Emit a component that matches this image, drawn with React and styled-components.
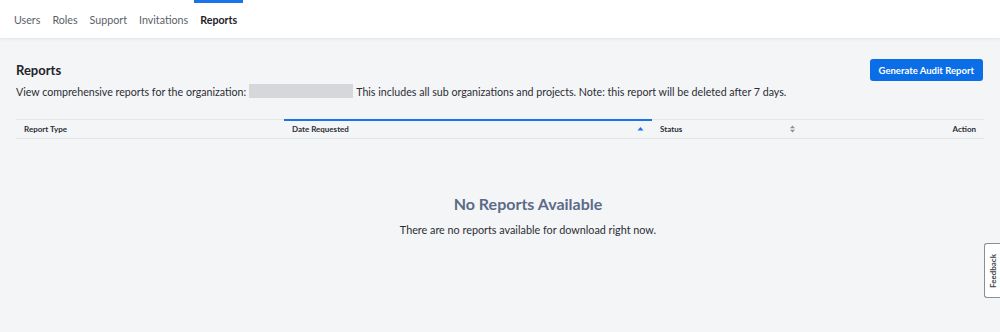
import React from 'react';
import styled, { createGlobalStyle } from 'styled-components';

const GlobalStyle = createGlobalStyle`
    html, body {
        margin: 0;
        padding: 0;
        background: #f4f5f7;
        font-family: Lato, "Noto Sans", sans-serif;
        color: #1f2329;
    }
    #root {
        min-height: 332px;
    }
`;

const Page = styled.div`
    position: relative;
    width: 1000px;
    height: 332px;
    overflow: hidden;
    background: #f4f5f7;
`;

const NavBar = styled.nav`
    display: flex;
    align-items: stretch;
    gap: 12px;
    height: 38px;
    padding: 0 14px;
    background: #ffffff;
    box-shadow: 0 1px 3px rgba(0, 0, 0, 0.08);
`;

const Tab = styled.div`
    display: flex;
    align-items: center;
    padding: 0 ${props => (props.active ? '6px' : '0')};
    margin: 0 ${props => (props.active ? '-6px' : '0')};
    font-size: 10.7px;
    font-weight: ${props => (props.active ? 700 : 400)};
    color: ${props => (props.active ? '#1f2329' : '#5b6068')};
    border-top: 3px solid ${props => (props.active ? '#1a73e8' : 'transparent')};
    border-bottom: 3px solid transparent;
`;

const Content = styled.main`
    padding: 20px 16px 0 16px;
`;

const HeaderRow = styled.div`
    display: flex;
    justify-content: space-between;
    align-items: flex-start;
`;

const Title = styled.h2`
    margin: 4px 0 6px 0;
    font-size: 13px;
    font-weight: 700;
    color: #1f2329;
`;

const Description = styled.p`
    display: flex;
    align-items: center;
    margin: 0;
    font-size: 10.65px;
    color: #2a2e34;
`;

const Redacted = styled.span`
    display: inline-block;
    width: 104px;
    height: 14px;
    margin: 0 3px 0 3px;
    background: #d6d7da;
`;

const PrimaryButton = styled.button`
    margin: 1px 1px 0 0;
    height: 22px;
    padding: 0 9px;
    border: none;
    border-radius: 3px;
    background: #0b6ee6;
    color: #ffffff;
    font-family: inherit;
    font-size: 9.5px;
    font-weight: 700;
    cursor: pointer;
`;

const Table = styled.div`
    margin-top: 21px;
    display: grid;
    grid-template-columns: 268px 368px 152px 1fr;
    border-top: 1px solid #e3e5e8;
    border-bottom: 1px solid #e3e5e8;
`;

const HeaderCell = styled.div`
    display: flex;
    align-items: center;
    justify-content: ${props => (props.right ? 'flex-end' : 'space-between')};
    height: 18px;
    padding: 0 8px;
    font-size: 8px;
    font-weight: 700;
    color: #2a2e34;
    box-shadow: ${props => (props.sorted ? 'inset 0 2px 0 #1a73e8' : 'none')};
    margin-top: -1px;
    padding-top: 1px;
`;

const SortIcon = styled.svg`
    width: 7px;
    height: 8px;
    flex-shrink: 0;
`;

const EmptyState = styled.div`
    display: flex;
    flex-direction: column;
    align-items: center;
    padding: 55px 0 0 56px;
`;

const EmptyTitle = styled.h3`
    margin: 0;
    font-size: 16px;
    font-weight: 700;
    color: #5b6b87;
`;

const EmptyText = styled.p`
    margin: 10px 0 0 0;
    font-size: 10.8px;
    color: #2a2e34;
`;

const FeedbackTab = styled.div`
    position: absolute;
    right: 0;
    top: 243px;
    width: 15px;
    height: 53px;
    display: flex;
    align-items: center;
    justify-content: center;
    background: #ffffff;
    border: 1px solid #8a8f96;
    border-right: none;
    border-radius: 3px 0 0 3px;
`;

const FeedbackLabel = styled.span`
    transform: rotate(-90deg);
    font-size: 8px;
    font-weight: 700;
    color: #3a3f45;
    white-space: nowrap;
`;

const SortUp = () => (
    <SortIcon viewBox="0 0 7 8">
        <path d="M0.5 5.5 L3.5 2 L6.5 5.5 Z" fill="#1a73e8" />
    </SortIcon>
);

const SortBoth = () => (
    <SortIcon viewBox="0 0 7 8">
        <path d="M1 3.3 L3.5 0.5 L6 3.3 Z" fill="#8a8f96" />
        <path d="M1 4.7 L3.5 7.5 L6 4.7 Z" fill="#8a8f96" />
    </SortIcon>
);

const tabs = ['Users', 'Roles', 'Support', 'Invitations', 'Reports'];

const App = () => {
    return (
        <Page>
            <GlobalStyle />
            <NavBar>
                {tabs.map(tab => (
                    <Tab key={tab} active={tab === 'Reports'}>
                        {tab}
                    </Tab>
                ))}
            </NavBar>
            <Content>
                <HeaderRow>
                    <div>
                        <Title>Reports</Title>
                        <Description>
                            View comprehensive reports for the organization:
                            <Redacted />
                            This includes all sub organizations and projects. Note: this report will be deleted after 7 days.
                        </Description>
                    </div>
                    <PrimaryButton>Generate Audit Report</PrimaryButton>
                </HeaderRow>
                <Table>
                    <HeaderCell>Report Type</HeaderCell>
                    <HeaderCell sorted>
                        Date Requested
                        <SortUp />
                    </HeaderCell>
                    <HeaderCell>
                        Status
                        <SortBoth />
                    </HeaderCell>
                    <HeaderCell right>Action</HeaderCell>
                </Table>
                <EmptyState>
                    <EmptyTitle>No Reports Available</EmptyTitle>
                    <EmptyText>There are no reports available for download right now.</EmptyText>
                </EmptyState>
            </Content>
            <FeedbackTab>
                <FeedbackLabel>Feedback</FeedbackLabel>
            </FeedbackTab>
        </Page>
    );
};

export default App;
